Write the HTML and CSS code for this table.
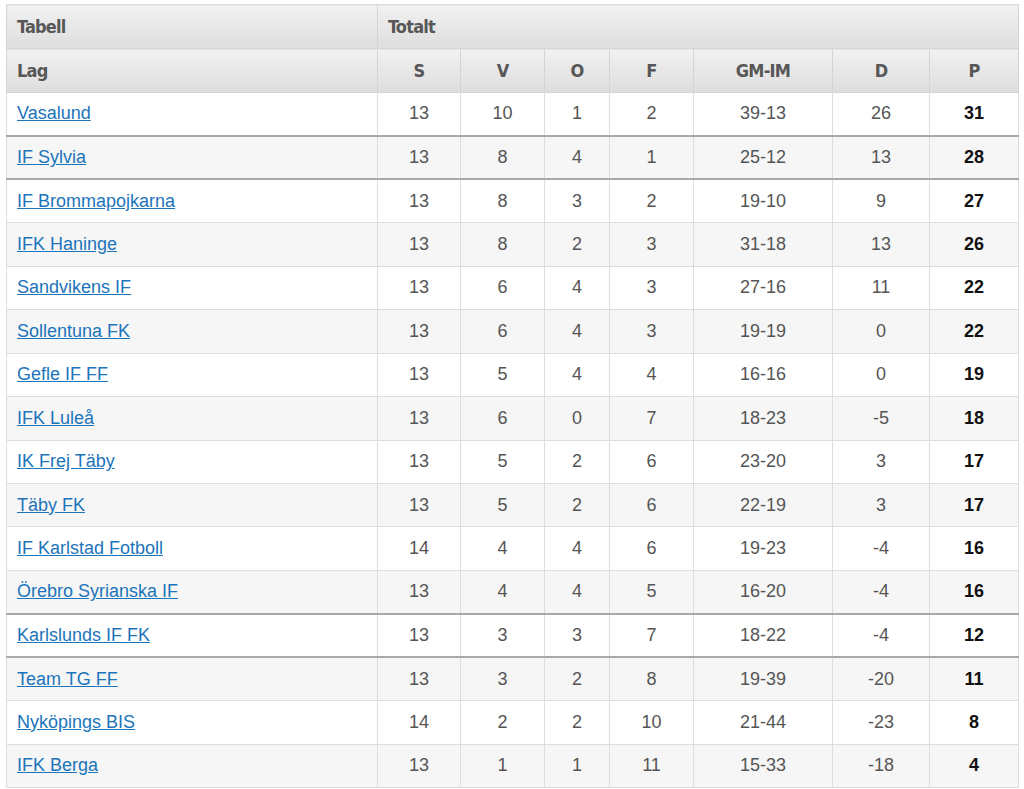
FILE: index.html
```html
<!DOCTYPE html>
<html lang="sv">
<head>
<meta charset="utf-8">
<title>Tabell</title>
<link rel="stylesheet" href="styles.css">
</head>
<body>
<table class="standings">
  <colgroup>
    <col class="c-lag"><col class="c-s"><col class="c-v"><col class="c-o"><col class="c-f"><col class="c-gm"><col class="c-d"><col class="c-p">
  </colgroup>
  <thead>
    <tr class="head">
      <th class="left">Tabell</th>
      <th class="left" colspan="7">Totalt</th>
    </tr>
    <tr class="head">
      <th class="left">Lag</th><th>S</th><th>V</th><th>O</th><th>F</th><th>GM-IM</th><th>D</th><th>P</th>
    </tr>
  </thead>
  <tbody>
    <tr><td class="team"><a href="#">Vasalund</a></td><td>13</td><td>10</td><td>1</td><td>2</td><td>39-13</td><td>26</td><td class="pts">31</td></tr>
    <tr class="sep alt"><td class="team"><a href="#">IF Sylvia</a></td><td>13</td><td>8</td><td>4</td><td>1</td><td>25-12</td><td>13</td><td class="pts">28</td></tr>
    <tr class="sep"><td class="team"><a href="#">IF Brommapojkarna</a></td><td>13</td><td>8</td><td>3</td><td>2</td><td>19-10</td><td>9</td><td class="pts">27</td></tr>
    <tr class="alt"><td class="team"><a href="#">IFK Haninge</a></td><td>13</td><td>8</td><td>2</td><td>3</td><td>31-18</td><td>13</td><td class="pts">26</td></tr>
    <tr><td class="team"><a href="#">Sandvikens IF</a></td><td>13</td><td>6</td><td>4</td><td>3</td><td>27-16</td><td>11</td><td class="pts">22</td></tr>
    <tr class="alt"><td class="team"><a href="#">Sollentuna FK</a></td><td>13</td><td>6</td><td>4</td><td>3</td><td>19-19</td><td>0</td><td class="pts">22</td></tr>
    <tr><td class="team"><a href="#">Gefle IF FF</a></td><td>13</td><td>5</td><td>4</td><td>4</td><td>16-16</td><td>0</td><td class="pts">19</td></tr>
    <tr class="alt"><td class="team"><a href="#">IFK Luleå</a></td><td>13</td><td>6</td><td>0</td><td>7</td><td>18-23</td><td>-5</td><td class="pts">18</td></tr>
    <tr><td class="team"><a href="#">IK Frej Täby</a></td><td>13</td><td>5</td><td>2</td><td>6</td><td>23-20</td><td>3</td><td class="pts">17</td></tr>
    <tr class="alt"><td class="team"><a href="#">Täby FK</a></td><td>13</td><td>5</td><td>2</td><td>6</td><td>22-19</td><td>3</td><td class="pts">17</td></tr>
    <tr><td class="team"><a href="#">IF Karlstad Fotboll</a></td><td>14</td><td>4</td><td>4</td><td>6</td><td>19-23</td><td>-4</td><td class="pts">16</td></tr>
    <tr class="alt"><td class="team"><a href="#">Örebro Syrianska IF</a></td><td>13</td><td>4</td><td>4</td><td>5</td><td>16-20</td><td>-4</td><td class="pts">16</td></tr>
    <tr class="sep"><td class="team"><a href="#">Karlslunds IF FK</a></td><td>13</td><td>3</td><td>3</td><td>7</td><td>18-22</td><td>-4</td><td class="pts">12</td></tr>
    <tr class="sep alt"><td class="team"><a href="#">Team TG FF</a></td><td>13</td><td>3</td><td>2</td><td>8</td><td>19-39</td><td>-20</td><td class="pts">11</td></tr>
    <tr><td class="team"><a href="#">Nyköpings BIS</a></td><td>14</td><td>2</td><td>2</td><td>10</td><td>21-44</td><td>-23</td><td class="pts">8</td></tr>
    <tr class="alt"><td class="team"><a href="#">IFK Berga</a></td><td>13</td><td>1</td><td>1</td><td>11</td><td>15-33</td><td>-18</td><td class="pts">4</td></tr>
  </tbody>
</table>
</body>
</html>
```

FILE: styles.css
```css
html, body {
  margin: 0;
  padding: 0;
  background: #ffffff;
}

body {
  padding: 4px 0 0 6px;
  font-family: "Liberation Sans", Arial, sans-serif;
}

.standings {
  border-collapse: collapse;
  width: 1013px;
  table-layout: fixed;
  border: 1px solid #dcdcdc;
}

.c-lag { width: 371px; }
.c-s { width: 83px; }
.c-v { width: 84px; }
.c-o { width: 65px; }
.c-f { width: 84px; }
.c-gm { width: 139px; }
.c-d { width: 97px; }
.c-p { width: 89px; }

.head th {
  height: 44px;
  box-sizing: border-box;
  padding: 0 10px;
  background: linear-gradient(to bottom, #f1f1f1 0%, #dedede 100%);
  border: 1px solid #d4d4d4;
  border-top: 0;
  font-family: "DejaVu Sans Condensed", "Liberation Sans Narrow", sans-serif;
  font-stretch: condensed;
  font-weight: bold;
  font-size: 18px;
  letter-spacing: -0.8px;
  color: #575757;
  text-align: center;
  vertical-align: middle;
}

.head th.left {
  text-align: left;
}

tbody td {
  height: 43.45px;
  box-sizing: border-box;
  padding: 0 10px;
  border: 1px solid #dddddd;
  font-size: 18px;
  color: #555555;
  text-align: center;
  vertical-align: middle;
  background: #ffffff;
}

tbody tr.alt td {
  background: #f6f6f6;
}

tbody tr.sep td {
  border-top: 2px solid #a9a9a9;
}

tbody td.team {
  text-align: left;
}

tbody td.team a {
  color: #1c74bb;
  text-decoration: underline;
}

tbody td.pts {
  color: #111111;
  font-weight: bold;
}
```
